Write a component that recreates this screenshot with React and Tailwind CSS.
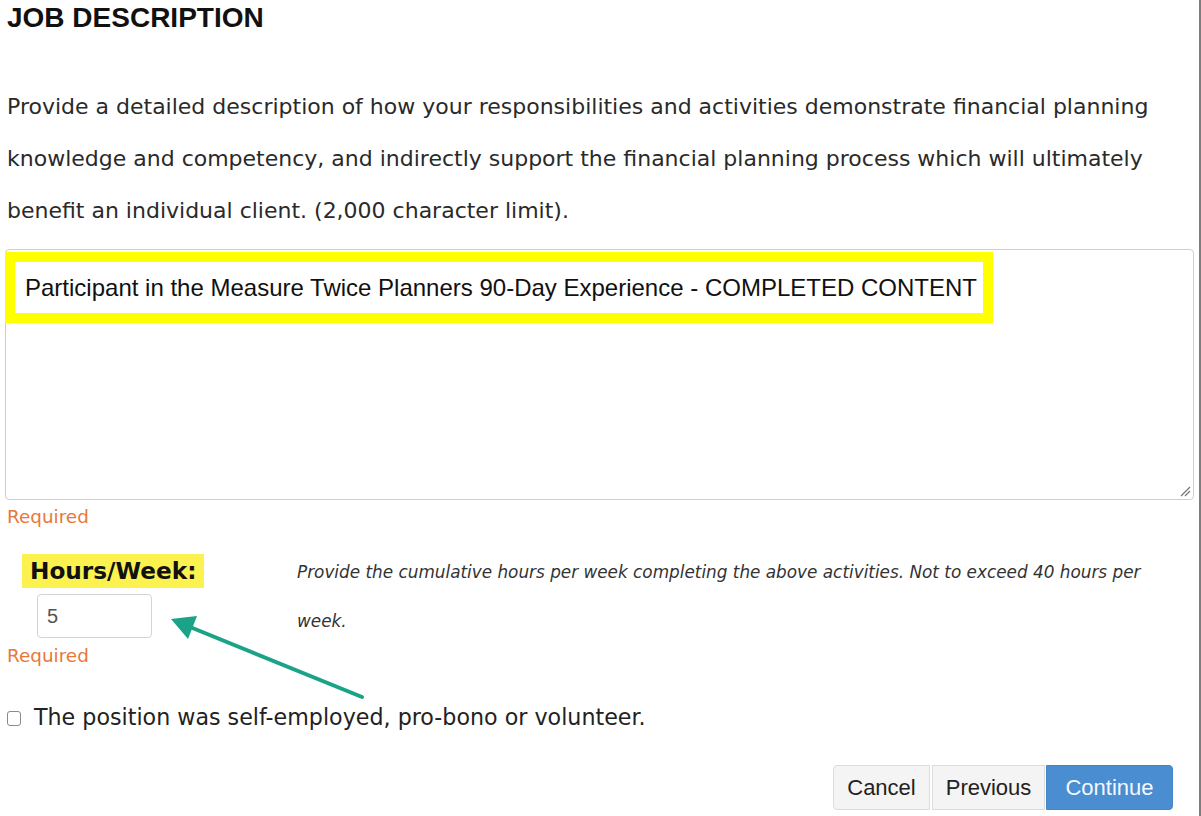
export default function App() {
  const sans = { fontFamily: '"DejaVu Sans", Verdana, sans-serif' };
  const arial = { fontFamily: '"Liberation Sans", Arial, sans-serif' };
  return (
    <div className="relative w-[1201px] h-[816px] bg-white overflow-hidden border-r-2 border-[#7d7d7d]">
      <h1 className="ml-[7px] pt-[2px] text-[28px] leading-[32px] font-bold text-[#111]" style={arial}>
        JOB DESCRIPTION
      </h1>
      <p className="ml-[7px] mt-[47px] w-[1170px] text-[22px] leading-[52px] text-[#2a2a2a]" style={sans}>
        Provide a detailed description of how your responsibilities and activities demonstrate financial planning knowledge and competency, and indirectly support the financial planning process which will ultimately benefit an individual client. (2,000 character limit).
      </p>
      <div className="relative ml-[5px] mt-[12px] w-[1189px] h-[251px] border border-[#cfcfcf] rounded-[4px] bg-white">
        <div className="absolute left-[-1px] top-[2px] w-[988px] h-[71px] border-[10px] border-[#ffff00] bg-white flex items-center pl-[10px] text-[24px] text-[#111]" style={arial}>
          Participant in the Measure Twice Planners 90-Day Experience - COMPLETED CONTENT
        </div>
        <svg className="absolute right-[2px] bottom-[2px]" width="12" height="12" viewBox="0 0 12 12">
          <line x1="2" y1="11" x2="11" y2="2" stroke="#777" strokeWidth="1.2" />
          <line x1="6" y1="11" x2="11" y2="6" stroke="#777" strokeWidth="1.2" />
        </svg>
      </div>
      <div className="ml-[7px] mt-[7px] text-[18.4px] leading-[20px] text-[#e9773a]" style={sans}>Required</div>
      <div className="mt-[21px] flex items-start">
        <div className="w-[297px] pt-[6px] shrink-0">
          <div className="ml-[22px] inline-block bg-[#fbf24f] px-[8px] h-[34px] leading-[34px] text-[23.2px] font-bold text-[#111]" style={sans}>
            Hours/Week:
          </div>
          <div className="ml-[37px] mt-[6px] w-[115px] h-[44px] border border-[#d4d4d4] rounded-[4px] pl-[9px] flex items-center text-[20px] text-[#555]" style={arial}>
            5
          </div>
          <div className="ml-[7px] mt-[8px] text-[18.4px] leading-[20px] text-[#e9773a]" style={sans}>Required</div>
        </div>
        <div className="w-[870px] italic text-[16.85px] leading-[49px] text-[#333]" style={sans}>
          Provide the cumulative hours per week completing the above activities. Not to exceed 40 hours per week.
        </div>
      </div>
      <div className="mt-[37px] ml-[7px] flex items-center h-[30px]">
        <span className="w-[14px] h-[15px] border border-[#8a8a8a] rounded-[3px] bg-white shrink-0"></span>
        <span className="ml-[13px] text-[22.2px] text-[#222]" style={sans}>
          The position was self-employed, pro-bono or volunteer.
        </span>
      </div>
      <div className="mt-[32px] flex justify-end pr-[26px]" style={arial}>
        <button className="w-[97px] h-[45px] bg-[#f4f4f4] border border-[#dcdcdc] rounded-l-[4px] text-[22px] text-[#222]">Cancel</button>
        <button className="ml-[2px] w-[113px] h-[45px] bg-[#f4f4f4] border border-[#dcdcdc] text-[22px] text-[#222]">Previous</button>
        <button className="ml-[1px] w-[127px] h-[45px] bg-[#4a8dd0] border border-[#4586c8] rounded-r-[4px] text-[22px] text-[#f4f8ff]">Continue</button>
      </div>
      <svg className="absolute left-[160px] top-[605px] pointer-events-none" width="215" height="100" viewBox="0 0 215 100">
        <line x1="202" y1="92" x2="30" y2="22" stroke="#1aa386" strokeWidth="4" strokeLinecap="round" />
        <polygon points="11,14 37,11 28,34" fill="#1aa386" />
      </svg>
    </div>
  );
}
